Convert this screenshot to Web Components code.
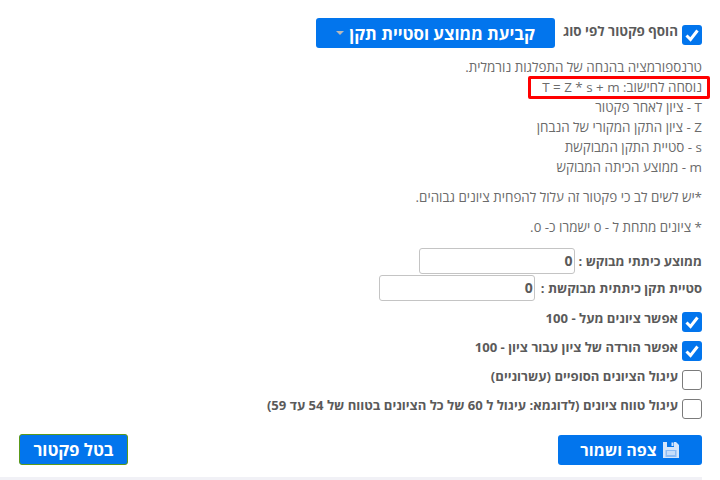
<!DOCTYPE html>
<html lang="he" dir="rtl">
<head>
<meta charset="utf-8">
<title>factor</title>
<style>
    html, body { margin: 0; height: 480px; overflow: hidden; background: #fff; }
    body { font-family: "Open Sans", "Liberation Sans", sans-serif; font-size: 14px; color: #6b6b6b; }
</style>
</head>
<body>
<factor-form>
    <check-row slot="head" checked>הוסף פקטור לפי סוג</check-row>
    <blue-button slot="head" caret>קביעת ממוצע וסטיית תקן</blue-button>

    <help-line slot="help">טרנספורמציה בהנחה של התפלגות נורמלית.</help-line>
    <help-line slot="help"><red-mark>נוסחה לחישוב: T = Z * s + m</red-mark></help-line>
    <help-line slot="help">T - ציון לאחר פקטור</help-line>
    <help-line slot="help">Z - ציון התקן המקורי של הנבחן</help-line>
    <help-line slot="help">s - סטיית התקן המבוקשת</help-line>
    <help-line slot="help">m - ממוצע הכיתה המבוקש</help-line>
    <help-line slot="help" gap>*יש לשים לב כי פקטור זה עלול להפחית ציונים גבוהים.</help-line>
    <help-line slot="help" gap>* ציונים מתחת ל - 0 ישמרו כ- 0.</help-line>

    <num-field slot="fields" value="0" style="--field-gap: 4px">ממוצע כיתתי מבוקש :</num-field>
    <num-field slot="fields" value="0">סטיית תקן כיתתית מבוקשת :</num-field>

    <check-row slot="checks" checked>אפשר ציונים מעל - 100</check-row>
    <check-row slot="checks" checked>אפשר הורדה של ציון עבור ציון - 100</check-row>
    <check-row slot="checks">עיגול הציונים הסופיים (עשרוניים)</check-row>
    <check-row slot="checks">עיגול טווח ציונים (לדוגמא: עיגול ל 60 של כל הציונים בטווח של 54 עד 59)</check-row>

    <blue-button slot="actions" save>צפה ושמור</blue-button>
    <blue-button slot="actions" green>בטל פקטור</blue-button>
</factor-form>

<script>
class FactorForm extends HTMLElement {
    constructor() {
        super();
        this.attachShadow({ mode: 'open' });
    }

    connectedCallback() {
        this.shadowRoot.innerHTML = `
            <style>
                :host { display: block; height: 480px; box-sizing: border-box; padding: 18px 18px 0 18px; position: relative; }
                .head { display: flex; gap: 8px; align-items: center; height: 30px; }
                .help { margin-top: 9px; }
                .fields { margin-top: 11px; display: flex; flex-direction: column; gap: 2px; }
                .checks { margin-top: 12px; display: flex; flex-direction: column; gap: 9px; }
                .actions { margin-top: 15px; display: flex; justify-content: space-between; align-items: center; padding-left: 1px; }
                .edge { position: absolute; left: 0; right: 18px; top: 477px; height: 3px; background: #f1f1f6; }
            </style>
            <div class="head"><slot name="head"></slot></div>
            <div class="help"><slot name="help"></slot></div>
            <div class="fields"><slot name="fields"></slot></div>
            <div class="checks"><slot name="checks"></slot></div>
            <div class="actions"><slot name="actions"></slot></div>
            <div class="edge"></div>
        `;
    }
}

class CheckRow extends HTMLElement {
    constructor() {
        super();
        this.attachShadow({ mode: 'open' });
    }

    connectedCallback() {
        const tick = this.hasAttribute('checked')
            ? '<svg viewBox="0 0 20 20" width="20" height="20"><path d="M4.5 10.5l4 4 7-9" fill="none" stroke="#fff" stroke-width="3"/></svg>'
            : '';
        this.shadowRoot.innerHTML = `
            <style>
                :host { display: flex; align-items: center; gap: 4px; font-weight: bold; font-size: 13.1px; color: #5a5a5a; height: 20px; position: relative; top: 0; }
                :host([slot="head"]) { top: 7px; height: 20px; align-self: flex-start; font-size: 13.4px; }
                .box { flex: none; width: 20px; height: 20px; box-sizing: border-box; border-radius: 3px; background: #fff; border: 1px solid #7b7b7b; }
                .box.on { background: #0275ed; border: 0; }
                svg { display: block; }
                .text { position: relative; top: -4px; white-space: nowrap; }
            </style>
            <span class="box ${tick ? 'on' : ''}">${tick}</span>
            <span class="text"><slot></slot></span>
        `;
    }
}

class BlueButton extends HTMLElement {
    constructor() {
        super();
        this.attachShadow({ mode: 'open' });
    }

    connectedCallback() {
        const caret = this.hasAttribute('caret') ? '<i class="caret"></i>' : '';
        const icon = this.hasAttribute('save')
            ? `<svg viewBox="0 0 18 18" width="18" height="18">
                   <path d="M1 1h13l3 3v13H1z" fill="#d6e6fa"/>
                   <path d="M5 1h7v5H5z" fill="#0275ed"/>
                   <path d="M9.5 1.5h2v3.5h-2z" fill="#d6e6fa"/>
                   <path d="M3.5 9h11v7h-11z" fill="#8fbdf5"/>
                   <path d="M5 11h8M5 13h8" stroke="#fff" stroke-width="1"/>
               </svg>`
            : '';
        let size = 'width: 144px; height: 30px; font-size: 16px;';
        if (this.hasAttribute('caret')) size = 'width: 239px; height: 30px; font-size: 16.8px;';
        if (this.hasAttribute('green')) size = 'width: 109px; height: 31px; border: 1px solid #5c9a1a; box-sizing: border-box; font-size: 16.8px;';
        this.shadowRoot.innerHTML = `
            <style>
                :host { display: inline-flex; flex: none; align-items: center; justify-content: center; gap: 5px; ${size}
                    background: #0275ed; color: #fff; border-radius: 3px; font-weight: bold; white-space: nowrap; }
                .caret { border: 4px solid transparent; border-top: 4px solid #b9b9b9; border-bottom: 0; }
                svg { display: block; }
            </style>
            ${icon}<slot></slot>${caret}
        `;
    }
}

class HelpLine extends HTMLElement {
    constructor() {
        super();
        this.attachShadow({ mode: 'open' });
    }

    connectedCallback() {
        this.shadowRoot.innerHTML = `
            <style>
                :host { display: block; line-height: 20px; height: 20px; color: #6b6b6b; font-size: 13.4px; white-space: nowrap; }
                :host([gap]) { margin-top: 10px; }
            </style>
            <slot></slot>
        `;
    }
}

class RedMark extends HTMLElement {
    constructor() {
        super();
        this.attachShadow({ mode: 'open' });
    }

    connectedCallback() {
        this.shadowRoot.innerHTML = `
            <style>
                :host { display: inline-block; position: relative; }
                .frame { position: absolute; top: -1px; bottom: -2px; left: -14px; right: -8px; border: 3px solid #f00; border-radius: 2px; }
            </style>
            <slot></slot><span class="frame"></span>
        `;
    }
}

class NumField extends HTMLElement {
    constructor() {
        super();
        this.attachShadow({ mode: 'open' });
    }

    connectedCallback() {
        const value = this.getAttribute('value');
        this.shadowRoot.innerHTML = `
            <style>
                :host { display: flex; align-items: center; gap: var(--field-gap, 6px); height: 25px; font-weight: bold; font-size: 13px; color: #5a5a5a; white-space: nowrap; }
                input { width: 156px; height: 26px; box-sizing: border-box; border: 1px solid #c4c4c4; border-radius: 3px;
                    padding: 0 1px 0 0; margin: 0; font: bold 14px "Open Sans", sans-serif; color: #5a5a5a; text-align: right; direction: rtl; background: #fff; }
            </style>
            <slot></slot><input type="text" value="${value}" aria-label="${this.textContent.trim()}">
        `;
    }
}

customElements.define('factor-form', FactorForm);
customElements.define('check-row', CheckRow);
customElements.define('blue-button', BlueButton);
customElements.define('help-line', HelpLine);
customElements.define('red-mark', RedMark);
customElements.define('num-field', NumField);
</script>
</body>
</html>
